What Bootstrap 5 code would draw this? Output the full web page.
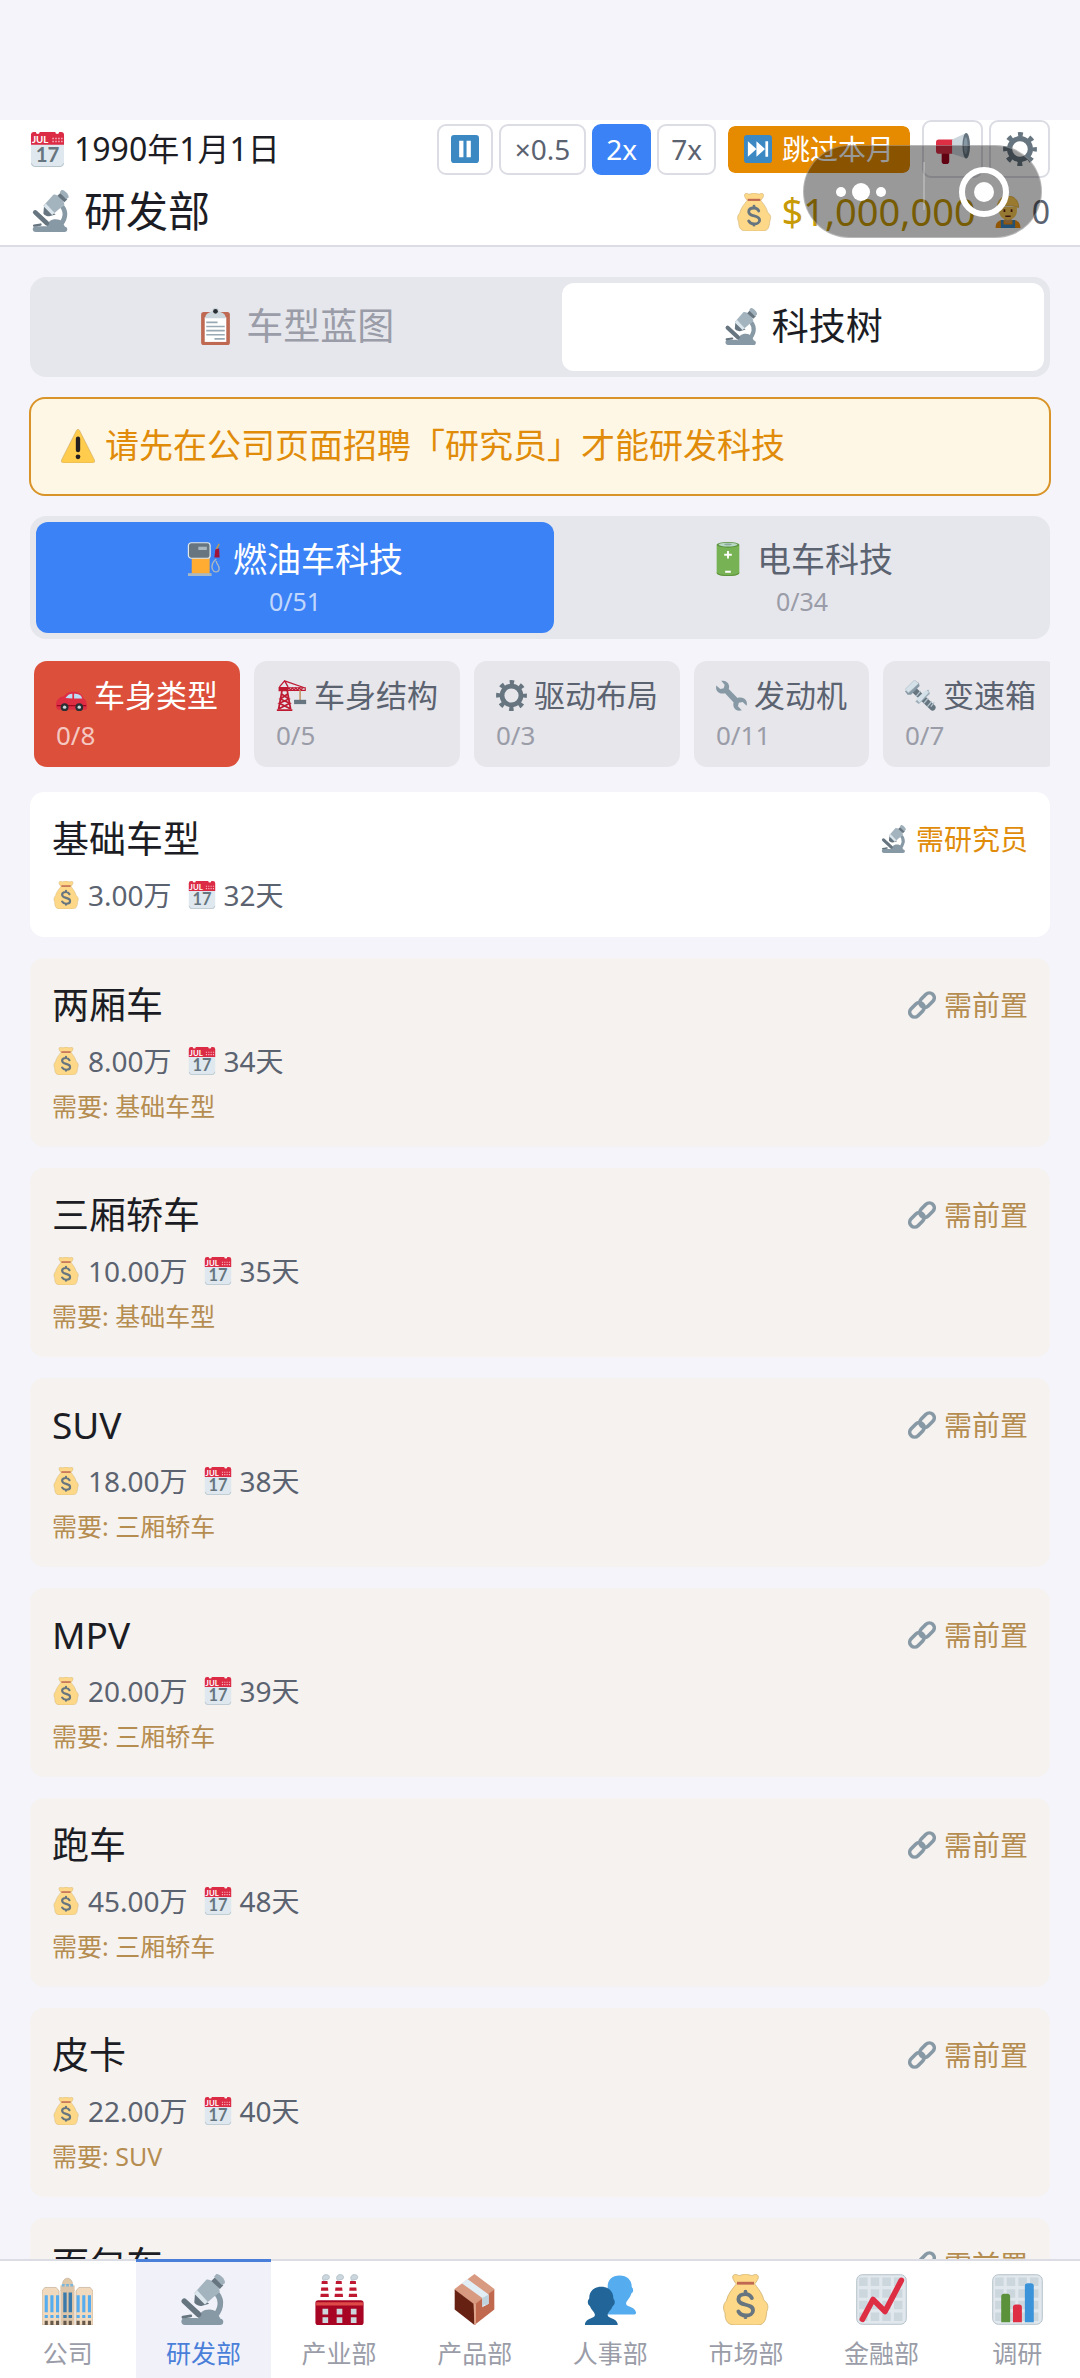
<!DOCTYPE html>
<html lang="zh-CN">
<head>
<meta charset="utf-8">
<meta name="viewport" content="width=device-width, initial-scale=1">
<title>研发部</title>
<link rel="stylesheet" href="https://cdn.jsdelivr.net/npm/bootstrap@5.3.0/dist/css/bootstrap.min.css">
<style>
:root { --ink:#1c1d24; --slate:#5b6270; --muted:#9a9ca8; --amber:#e08c0a; --tan:#b68d50; --blue:#3b82f6; --line:#dcdde4; }
body { font-family:"Noto Sans","Noto Sans CJK SC",sans-serif; background:#f4f4fa; color:var(--ink); line-height:1.25; }
.app-shell { height:100vh; padding-top:120px; }
.ico { width:1em; height:1em; flex:none; overflow:visible; }
.app-head { border-bottom:2px solid var(--line); padding:0 30px; }
.head-top { height:58px; }
.head-sub { height:67px; }
.date-text { font-size:32px; gap:9px; }
.date-text .ico { font-size:35px; }
.page-name { font-size:42px; gap:12px; font-weight:400; }
.tool { height:51px; border:2px solid var(--line); border-radius:9px; background:#fff; color:var(--slate); font-size:28px; padding:0 14px; display:flex; align-items:center; justify-content:center; gap:10px; line-height:1; }
.tool-tight { padding:0 12px; }
.tool-on { background:var(--blue); border-color:var(--blue); color:#fff; }
.tool-skip { background:#e68a00; background-clip:padding-box; border-color:#fff; color:#fff; padding:0 16px; margin:0 4px; }
.tool-sq { width:61px; height:58px; padding:0; font-size:34px; }
.tools { gap:6px; }
.money { font-size:38px; color:#c79a06; gap:8px; }
.staff { font-size:32px; color:var(--slate); gap:8px; }
.capsule { position:absolute; right:38px; top:145px; width:239px; height:93px; border-radius:47px; background:rgba(0,0,0,.4); border:1px solid rgba(255,255,255,.3); }
.capsule button { border:0; background:none; padding:0 4px 0 0; }
.capsule button + button { padding:0 0 0 4px; position:relative; }
.capsule button + button::before { content:""; position:absolute; left:0; top:18%; bottom:30%; border-left:2px solid rgba(255,255,255,.25); }
.page-body { padding:30px 30px 0; scrollbar-width:none; }
.page-body::-webkit-scrollbar, .chips::-webkit-scrollbar { display:none; }
.seg { background:#e6e7ec; border-radius:16px; padding:6px; gap:6px; }
.seg-btn { border:0; background:none; border-radius:12px; color:var(--slate); font-size:34px; padding:0; }
.seg-btn .face { gap:12px; }
.seg-main { font-size:37px; height:88px; color:var(--muted); padding-bottom:2px; }
.seg-main.active { background:#fff; color:var(--ink); }
.seg-fuel { height:111px; }
.seg-fuel.active { background:var(--blue); color:#fff; }
.tally { font-size:25px; line-height:38px; color:var(--muted); }
.seg-fuel .face { line-height:46px; }
.active > .tally { color:rgba(255,255,255,.7); }
.notice { background:#fff7e5; border:2px solid #d89428; border-radius:16px; color:var(--amber); font-size:34px; height:99px; margin:20px -1px; padding:0 30px 2px; gap:10px; }
.chips { gap:14px; margin-top:22px; margin-bottom:25px; padding-left:4px; overflow-x:auto; scrollbar-width:none; }
.chip { height:106px; border:0; border-radius:13px; background:#e6e6eb; color:var(--slate); font-size:31px; padding:2px 22px 0; flex:none; text-align:left; }
.chip .face { gap:7px; line-height:40px; }
.chip .tally { line-height:40px; font-size:26px; }
.chip.active { background:#dc4f3a; color:#fff; }
.tech { border:0; border-radius:14px; padding:20px 22px 22px; margin-bottom:21px; color:var(--ink); }
.tech.locked { background:#f5f2ef; padding-bottom:24px; }
.tech-name { font-size:37px; line-height:54px; margin:0; font-weight:400; }
.tech-state { font-size:28px; color:var(--amber); gap:8px; }
.tech-cost { font-size:28px; line-height:40px; margin-top:9px; color:var(--slate); gap:16px; }
.tech-cost span { gap:8px; }
.tech-need { font-size:25px; line-height:34px; margin:8px 0 0; color:var(--tan); }
.locked .tech-state { color:var(--tan); }
.tab-wrap { overflow:hidden; }
.tab-bar { margin-right:-5px; }
.tab-bar a { flex:1 1 0; height:119px; border-top:2px solid var(--line); padding-top:13px; color:var(--muted); font-size:25px; line-height:36px; text-decoration:none; gap:10px; background:#fff; }
.tab-bar .ico { font-size:51px; }
.tab-bar a.active { border-top:3px solid #4a7fd9; padding-top:12px; background:#f0f1f9; color:#4a7fd9; }
</style>
</head>
<body>
<svg width="0" height="0" class="d-none" aria-hidden="true">
  <symbol id="i-cal" viewBox="0 0 36 36">
    <path fill="#dfe8ee" d="M1 12h34v20a4 4 0 0 1-4 4H5a4 4 0 0 1-4-4z"/>
    <path fill="none" stroke="#b6c2ca" d="M1.500 32a4 4 0 0 0 3.500 3.500h26a4 4 0 0 0 3.500-3.500"/>
    <path fill="#dc2b45" d="M1 13V3a3 3 0 0 1 3-3h2a2 2 0 0 0 4 0h16a2 2 0 0 0 4 0h2a3 3 0 0 1 3 3v10z"/>
    <g fill="#f7b6c0"><path d="M23 6h1.500v1.500H23zm3 0h1.500v1.500H26zm3 0h1.500v1.500H29zm3 0h1.500v1.500H32zM23 9h1.500v1.500H23zm3 0h1.500v1.500H26zm3 0h1.500v1.500H29zm3 0h1.500v1.500H32z"/></g>
    <text x="2" y="11.500" font-family="Lato,sans-serif" font-size="10" font-weight="700" fill="#fff">JUL</text>
    <text x="18" y="31" text-anchor="middle" font-family="Lato,sans-serif" font-size="21" font-weight="700" fill="#66757f">17</text>
  </symbol>
  <symbol id="i-micro" viewBox="0 0 36 36">
    <path fill="none" stroke="#8899a6" stroke-width="4" d="M27.500 14c4 5 3 12-3 17"/>
    <path fill="#8899a6" d="M14 32c1-5 4-7 8-7 5 0 6 3 8 6.500 2.500 0 3 4.500-.5 4.500H5c-3.500 0-3.500-5 0-5h9z"/>
    <path stroke="#66757f" stroke-width="4" stroke-linecap="round" d="M4.500 19.200 14.500 28.500"/>
    <path stroke="#66757f" stroke-width="2" stroke-linecap="round" d="M3.500 30.500 9 29.600"/>
    <path fill="#66757f" d="m12 14-.5 6c0 1 3 3 5 2.500L22 21z"/>
    <path fill="#a4b4bf" d="M20 4c3-1 9 4 9.500 8.500L19 21.500c-2-3-5-6-7.500-8z"/>
    <path fill="#dbe5ec" d="m13.500 11.500 7.500 8-2 2-7.500-7.500z"/>
    <path fill="#66757f" d="m26 2.500 6 5.500-2.500 2.500L23.500 5z"/>
    <path fill="#9fb0bb" d="M27 0c2-.5 7 4 6 6.500L31 8l-5.500-6z"/>
  </symbol>
  <symbol id="i-clip" viewBox="0 0 36 36">
    <rect x="4" y="4" width="28" height="32" rx="2.500" fill="#bf6952"/>
    <path fill="#fff" d="M7.500 9h21v24h-21z"/>
    <path fill="#ccd6dd" d="M14 3h8c0 2 6 1 6 7H8c0-6 6-5 6-7z"/>
    <circle cx="18" cy="2.800" r="3.200" fill="#ccd6dd"/><circle cx="18" cy="3.200" r="2.300" fill="#292f33"/>
    <path stroke="#99aab5" stroke-width="1.600" d="M9 14h11M9 18h18M9 22h18M9 26h18M17 30h10"/>
  </symbol>
  <symbol id="i-warn" viewBox="0 0 36 36">
    <path fill="#ffcc4d" stroke="#c6a763" stroke-width=".6" d="M2.700 36c-2.200 0-3-1.700-2-3.500L16.400 1.500c.9-1.700 2.300-1.700 3.200 0l15.700 31c1 1.800.2 3.500-2 3.500z"/>
    <rect x="15.700" y="8" width="4.600" height="16.500" rx="2.300" fill="#231f20"/><circle cx="18" cy="29.500" r="2.500" fill="#231f20"/>
  </symbol>
  <symbol id="i-pump" viewBox="0 0 36 36">
    <path fill="none" stroke="#aab8c2" stroke-width="1.500" d="M31 18c-5 4-5 8-4 11s6 4 7 0-3-5-3-9"/>
    <path stroke="#bf9a4f" stroke-width="1.600" d="m34 2-3 6"/><path fill="#a0143a" d="m30 8 4-1.500.5 10H29z"/>
    <path fill="#ffac33" d="M5 16h19v18H5z"/><path fill="#aab8c2" d="M1 33h25v3H1z"/>
    <rect x="1.500" y=".8" width="23" height="16.400" rx="3" fill="#66757f" stroke="#e1e8ed" stroke-width="1.300"/>
    <path fill="#aab8c2" d="M12 5h9v3.500h-9z"/>
  </symbol>
  <symbol id="i-batt" viewBox="0 0 36 36">
    <path fill="#77b255" d="M6 3v30c0 4 24 4 24 0V3z"/><path fill="none" stroke="#5c913b" stroke-width="1" d="M6.500 32.500c0 4 23 4 23 0"/>
    <ellipse cx="18" cy="3" rx="12" ry="3" fill="#5c913b"/><ellipse cx="18" cy="2.700" rx="10" ry="2" fill="#b8d8c8"/><ellipse cx="18" cy="2.500" rx="4" ry="1" fill="#8da99b"/>
    <path stroke="#fff" stroke-width="2" d="M18 9.500v8M14 13.500h8M15 31.500h6"/>
  </symbol>
  <symbol id="i-car" viewBox="0 0 36 36">
    <path fill="#dd2e44" d="M0 29c0-5 3-9 9-10 3-4 6-5.500 11-5.500 7 0 10 3 12 8 3 1 4 5 4 10 0 2-1 3-3 3H3c-2 0-3-2-3-5.500z"/>
    <path fill="#bbddf5" d="M11 21c3-4 5-5 8-5v5.500zm10-5c5 0 8 1 9.500 5.500H21z"/>
    <path fill="#a0041e" d="M1 29h34v1.500H1z"/>
    <g fill="#292f33"><circle cx="10" cy="31.500" r="4.500"/><circle cx="27" cy="31.500" r="4.500"/></g><g fill="#ccd6dd"><circle cx="10" cy="31.500" r="2"/><circle cx="27" cy="31.500" r="2"/></g>
  </symbol>
  <symbol id="i-crane" viewBox="0 0 36 36">
    <path fill="none" stroke="#be1931" stroke-width="2" d="M7 12 3 34M13 12l4 22M6 16l9 6-11 5 12 6M14 16l-9 6 11 5-12 6"/>
    <path fill="none" stroke="#be1931" stroke-width="1.500" d="M4 8 10 1l4 7M10 1l23 8"/>
    <path fill="#be1931" d="M3 8h11v5H3zM1 34h18v2H1z"/><path fill="none" stroke="#be1931" stroke-width="1.300" d="M13 9h21v3H13l2-3 2 3 2-3 2 3 2-3 2 3 2-3 2 3 2-3"/>
    <path stroke="#c69b6d" stroke-width="2" d="M28 12v12"/><path fill="#66757f" d="M21 23h14v5H21z"/>
  </symbol>
  <symbol id="i-gear" viewBox="0 0 36 36">
    <circle cx="18" cy="18" r="11" fill="none" stroke="#66757f" stroke-width="5.500"/>
    <circle cx="18" cy="18" r="15.400" fill="none" stroke="#66757f" stroke-width="5" stroke-dasharray="5.200 6.895" stroke-dashoffset="2.600"/>
  </symbol>
  <symbol id="i-wrench" viewBox="0 0 36 36">
    <path fill="#8899a6" d="M6 1c4-1 8 1 9 5 .4 1.500.2 3-.2 4.500L25 21c4-1.500 9 0 10.500 4 .6 1.700.4 3.500 0 5L31 25.500l-4.500 1-1 4L30 35c-4 1.500-8 0-9.500-4-.6-1.700-.5-3.500 0-5L10.500 15.500C6.500 16.500 2 15 .5 11.500 0 10 0 8 .3 6.500L5 10.500l4-1 1-4z"/>
  </symbol>
  <symbol id="i-bolt" viewBox="0 0 36 36">
    <path stroke="#66757f" stroke-width="7" stroke-linecap="round" d="m11 12 21 20"/>
    <path stroke="#b3c3cd" stroke-width="1.500" d="m13 19 5-6m4 14 5-6m-1 10 5-6m-14-2 5-6m8 14 4-5"/>
    <path fill="#8899a6" d="m0 13 3 4 4 0 10-10-1-4z"/><path fill="#d5e1e8" stroke="#9fb0bb" stroke-width=".6" d="m0 11 11-11 5 4L4 15z"/>
    <path fill="#9fb0bb" d="m12 25 4 3 13-12-2-5z"/><path fill="#d5e1e8" d="m13 22 11-10 4 2-11 12z"/>
  </symbol>
  <symbol id="i-bag" viewBox="0 0 36 36">
    <path fill="#fdd888" stroke="#c9ab6c" stroke-width=".5" d="M11.500 7C9 4 8 1.500 10 .5c2-.8 2 .8 4 .5 2-.3 2-1 4-1s2 .7 4 1c2 .3 2-1.300 4-.5 2 1 1 3.500-1.500 6.500 3 4 5.500 7 6.500 11.500 3 2 3.500 5 2 8C32.500 34 30.500 36 26 36H11c-5 0-7.500-2-7.500-8.500-1.500-3-1.500-6 1-8.500 1-5 4-8 7-12z"/>
    <path fill="#bf6952" d="M12 5.500h12v2H12z"/>
    <path fill="none" stroke="#66757f" stroke-width="2.700" stroke-linecap="round" d="M22.500 17c-1-2-2.500-2.800-4.500-2.800-3 0-5 1.300-5 3.500 0 5.500 10.300 2.500 10.300 8 0 2.200-2.300 3.600-5 3.600-2.300 0-4.300-1-5.300-2.800M18 12.500v1.500M18 29.500v1"/>
  </symbol>
  <symbol id="i-link" viewBox="0 0 36 36">
    <g fill="none" stroke="#8899a6" stroke-width="4.600"><rect x="14" y="5.500" width="21" height="12.500" rx="6.200" transform="rotate(-45 24.500 11.750)"/><rect x="1" y="18" width="21" height="12.500" rx="6.200" transform="rotate(-45 11.500 24.250)"/></g>
  </symbol>
  <symbol id="i-pause" viewBox="0 0 36 36"><rect width="36" height="36" rx="4" fill="#3b88c3"/><path fill="#fff" d="M10.500 7.500h5.500v21h-5.500zM20 7.500h5.500v21H20z"/></symbol>
  <symbol id="i-next" viewBox="0 0 36 36"><rect width="36" height="36" rx="4" fill="#3b88c3"/><path fill="#fff" d="M5 8l11 10L5 28zM16 8l11 10-11 10zM27.500 8H31v20h-3.500z"/></symbol>
  <symbol id="i-horn" viewBox="0 0 36 36">
    <path fill="#a0041e" d="M6 18h8v13a3 3 0 0 1-3 3H9a3 3 0 0 1-3-3z"/><path fill="#dd2e44" d="M3 8h15v15H3a3 3 0 0 1-3-3v-9a3 3 0 0 1 3-3z"/>
    <path fill="#ccd6dd" d="M17 8 32 1v27l-15-5z"/><ellipse cx="32" cy="14.500" rx="4" ry="13.500" fill="#66757f"/><ellipse cx="31.500" cy="14.500" rx="2" ry="9" fill="#8899a6"/>
  </symbol>
  <symbol id="i-worker" viewBox="0 0 36 36">
    <path fill="#f4900c" d="M4 36c0-7 4-9 9-9h10c5 0 9 2 9 9z"/><path fill="#3b88c3" d="M10 27h3v5h10v-5h3v9H10z"/>
    <path fill="#d39a5b" d="M14 22h8v7c-2 2-6 2-8 0z"/><path fill="#f9ca55" d="M8 12h20v5c0 6-5 10-10 10S8 23 8 17z"/>
    <path fill="#ffcc4d" stroke="#d9a635" stroke-width=".8" d="M6 13C6 5 11 0 18 0s12 5 12 13c-7-3-17-3-24 0z"/><path fill="#662113" d="M13 15h2v3h-2zm8 0h2v3h-2zm-6 7h6v1.500h-6z"/>
  </symbol>
  <symbol id="i-office" viewBox="0 0 36 36">
    <path fill="#f1d9bd" stroke="#c5b097" stroke-width=".5" d="M0 12l2-2.500h8L12 12v24H0zM24 12l2-2.500h8l2 2.500v24H24z"/><path fill="#dcc5a9" d="M13 11h10v25H13z"/>
    <path fill="#dcc5a9" d="M13 8h10v4H13z"/><path fill="#dfc9a8" stroke="#c5b097" stroke-width=".5" d="M14.500 7.500c0-6 7-6 7 0z"/>
    <path stroke="#55acee" stroke-width="2.200" d="M3 15v12M7 15v12M11 15v12M25.500 15v12M29.500 15v12M33.500 15v12M3 29v2M7 29v2M11 29v2M25.500 29v2M29.500 29v2M33.500 29v2"/>
    <path stroke="#3b7bab" stroke-width="2.400" d="M16.200 13v14M20 13v14M16.200 29v2M20 29v2"/><path stroke="#7cb5d8" stroke-width="1.800" d="M14 8h8" stroke-dasharray="2 1"/>
    <path stroke="#66594c" stroke-width="2.200" d="M3 33v3M7 33v3M11 33v3M16.200 33v3M20 33v3M25.500 33v3M29.500 33v3M33.500 33v3"/>
  </symbol>
  <symbol id="i-factory" viewBox="0 0 36 36">
    <g id="stack"><path fill="#fff" d="m5.500 5 4 0 1 14h-6z"/><path fill="#be1931" d="M5.500 5h4l.2 2H5.300zM5.100 9.500h4.800l.2 2.300H4.900zM4.700 14h5.600l.2 2.300h-6z"/><path fill="#ccd6dd" stroke="#aab8c2" stroke-width=".5" d="M6.500 4.500C5 2 7 0 9 .5c2.500 0 2.500 3.500 0 3.500z"/></g>
    <use href="#stack" x="10"/><use href="#stack" x="20"/>
    <rect x="1" y="18.500" width="34" height="17.500" rx="2" fill="#a80424"/><path fill="#dd4a48" d="M1.500 20h33v2.300h-33z"/>
    <path fill="#ccd6dd" d="M6 24.500h4v4H6zm10 0h4v4h-4zm10 0h4v4h-4zM6 30.500h4v4H6zm10 0h4v4h-4zm10 0h4v4h-4z"/>
  </symbol>
  <symbol id="i-box" viewBox="0 0 36 36">
    <path fill="#d99a82" d="M18 0 32 10.500v1L18 22 4 11.500v-1z"/><path fill="#662113" d="m4 11 14 10.500V36L4 25z"/><path fill="#c1694f" d="M32 11 18 21.500V36l14-11z"/><path fill="#e0a58d" d="M17.300 21h1.700v15l-1-.2z"/>
    <path fill="#e2eef5" d="m9 6.500 4-3L28 14.500V21l-4.500 2.500V17z"/><path fill="#bfd3df" d="M23.500 17 28 14.500V21l-2.200 1.200-.8-.9-1.500 2z"/>
  </symbol>
  <symbol id="i-people" viewBox="0 0 36 36">
    <path fill="#55acee" d="M16 9c0-5 3-8 8.500-8 5 0 8.500 3 8.500 8 0 .7 1 .8 1 2.500s-1 1.700-1.400 2.500C32 17 29 19 29 21c0 2.500 6 1.500 7 6 .2 1-.3 1.500-1 1.500H16z"/>
    <path fill="#226699" d="M3 17c0-5 3.500-8 8.500-8s8.500 3 8.500 8c0 1 1 1 1 3s-1.200 2.300-1.600 3C18.500 25.500 16 27 16 29c0 2.500 6 2 7 6 .3 1-.2 1.500-1 1.500H1c-.8 0-1.300-.5-1-1.500 1-4 7-3.500 7-6 0-2-2.500-3.500-3.400-6C3.200 22.300 2 22 2 20s1-2 1-3z"/>
  </symbol>
  <symbol id="i-grid" viewBox="0 0 36 36"><rect x=".5" y=".5" width="35" height="35" rx="4" fill="#e1e8ed" stroke="#b4c0c8" stroke-width=".7"/>
    <path fill="none" stroke="#ccd6dd" stroke-width="6" stroke-dasharray="6 2.200" d="M2.200 5.500h31.200M2.200 13.700h31.200M2.200 21.900h31.200M2.200 30.100h31.200"/></symbol>
  <symbol id="i-line" viewBox="0 0 36 36"><use href="#i-grid"/><path fill="none" stroke="#dd2e44" stroke-width="4" stroke-linecap="round" stroke-linejoin="round" d="m4.500 32 7.500-14 8.500 8.500L32 4.500"/></symbol>
  <symbol id="i-bars" viewBox="0 0 36 36"><use href="#i-grid"/><path fill="#5c913b" d="M6.500 34V16a2 2 0 0 1 2-2h2.300a2 2 0 0 1 2 2v18z"/><path fill="#dd2e44" d="M14.800 34V23.500a2 2 0 0 1 2-2h2.300a2 2 0 0 1 2 2V34z"/><path fill="#3b94d9" d="M23.200 34V8.500a2 2 0 0 1 2-2h2.300a2 2 0 0 1 2 2V34z"/></symbol>
</svg>

<div class="app-shell d-flex flex-column overflow-hidden">
  <header class="app-head bg-white flex-shrink-0">
    <div class="head-top d-flex align-items-center justify-content-between">
      <div class="date-text d-flex align-items-center"><svg class="ico"><use href="#i-cal"/></svg>1990年1月1日</div>
      <div class="tools d-flex align-items-center">
        <button type="button" class="tool tool-tight" aria-label="暂停"><svg class="ico"><use href="#i-pause"/></svg></button>
        <button type="button" class="tool">×0.5</button>
        <button type="button" class="tool tool-tight tool-on">2x</button>
        <button type="button" class="tool tool-tight">7x</button>
        <button type="button" class="tool tool-skip"><svg class="ico"><use href="#i-next"/></svg>跳过本月</button>
        <button type="button" class="tool tool-sq" aria-label="公告"><svg class="ico"><use href="#i-horn"/></svg></button>
        <button type="button" class="tool tool-sq" aria-label="设置"><svg class="ico"><use href="#i-gear"/></svg></button>
      </div>
    </div>
    <div class="head-sub d-flex align-items-center justify-content-between">
      <h1 class="page-name d-flex align-items-center m-0"><svg class="ico"><use href="#i-micro"/></svg>研发部</h1>
      <div class="d-flex align-items-center gap-3">
        <span class="money d-flex align-items-center"><svg class="ico"><use href="#i-bag"/></svg>$1,000,000</span>
        <span class="staff d-flex align-items-center"><svg class="ico"><use href="#i-worker"/></svg>0</span>
      </div>
    </div>
  </header>
  <div class="capsule d-flex">
    <button type="button" class="w-50" aria-label="更多"><svg width="60" height="24" viewBox="0 0 60 24" fill="#fff"><circle cx="10" cy="12" r="5"/><circle cx="30" cy="12" r="9"/><circle cx="50" cy="12" r="5"/></svg></button>
    <button type="button" class="w-50" aria-label="关闭"><svg width="52" height="52" viewBox="0 0 52 52"><circle cx="26" cy="26" r="22" fill="none" stroke="#fff" stroke-width="6"/><circle cx="26" cy="26" r="10" fill="#fff"/></svg></button>
  </div>

  <main class="page-body flex-grow-1 overflow-auto">
    <div class="seg d-flex">
      <button type="button" class="seg-btn seg-main flex-grow-1"><span class="face d-flex align-items-center justify-content-center"><svg class="ico"><use href="#i-clip"/></svg>车型蓝图</span></button>
      <button type="button" class="seg-btn seg-main flex-grow-1 active"><span class="face d-flex align-items-center justify-content-center"><svg class="ico"><use href="#i-micro"/></svg>科技树</span></button>
    </div>

    <div class="notice d-flex align-items-center" role="alert"><svg class="ico"><use href="#i-warn"/></svg><span>请先在公司页面招聘「研究员」才能研发科技</span></div>

    <div class="seg d-flex">
      <button type="button" class="seg-btn seg-fuel flex-grow-1 active"><span class="face d-flex align-items-center justify-content-center"><svg class="ico"><use href="#i-pump"/></svg>燃油车科技</span><span class="tally d-block">0/51</span></button>
      <button type="button" class="seg-btn seg-fuel flex-grow-1"><span class="face d-flex align-items-center justify-content-center"><svg class="ico"><use href="#i-batt"/></svg>电车科技</span><span class="tally d-block">0/34</span></button>
    </div>

    <div class="chips d-flex">
      <button type="button" class="chip active"><span class="face d-flex align-items-center"><svg class="ico"><use href="#i-car"/></svg>车身类型</span><span class="tally d-block">0/8</span></button>
      <button type="button" class="chip"><span class="face d-flex align-items-center"><svg class="ico"><use href="#i-crane"/></svg>车身结构</span><span class="tally d-block">0/5</span></button>
      <button type="button" class="chip"><span class="face d-flex align-items-center"><svg class="ico"><use href="#i-gear"/></svg>驱动布局</span><span class="tally d-block">0/3</span></button>
      <button type="button" class="chip"><span class="face d-flex align-items-center"><svg class="ico"><use href="#i-wrench"/></svg>发动机</span><span class="tally d-block">0/11</span></button>
      <button type="button" class="chip"><span class="face d-flex align-items-center"><svg class="ico"><use href="#i-bolt"/></svg>变速箱</span><span class="tally d-block">0/7</span></button>
    </div>

    <article class="tech card">
      <div class="d-flex align-items-center justify-content-between"><h2 class="tech-name">基础车型</h2><span class="tech-state d-flex align-items-center"><svg class="ico"><use href="#i-micro"/></svg>需研究员</span></div>
      <div class="tech-cost d-flex"><span class="d-flex align-items-center"><svg class="ico"><use href="#i-bag"/></svg>3.00万</span><span class="d-flex align-items-center"><svg class="ico"><use href="#i-cal"/></svg>32天</span></div>
    </article>
    <article class="tech card locked">
      <div class="d-flex align-items-center justify-content-between"><h2 class="tech-name">两厢车</h2><span class="tech-state d-flex align-items-center"><svg class="ico"><use href="#i-link"/></svg>需前置</span></div>
      <div class="tech-cost d-flex"><span class="d-flex align-items-center"><svg class="ico"><use href="#i-bag"/></svg>8.00万</span><span class="d-flex align-items-center"><svg class="ico"><use href="#i-cal"/></svg>34天</span></div>
      <p class="tech-need">需要: 基础车型</p>
    </article>
    <article class="tech card locked">
      <div class="d-flex align-items-center justify-content-between"><h2 class="tech-name">三厢轿车</h2><span class="tech-state d-flex align-items-center"><svg class="ico"><use href="#i-link"/></svg>需前置</span></div>
      <div class="tech-cost d-flex"><span class="d-flex align-items-center"><svg class="ico"><use href="#i-bag"/></svg>10.00万</span><span class="d-flex align-items-center"><svg class="ico"><use href="#i-cal"/></svg>35天</span></div>
      <p class="tech-need">需要: 基础车型</p>
    </article>
    <article class="tech card locked">
      <div class="d-flex align-items-center justify-content-between"><h2 class="tech-name">SUV</h2><span class="tech-state d-flex align-items-center"><svg class="ico"><use href="#i-link"/></svg>需前置</span></div>
      <div class="tech-cost d-flex"><span class="d-flex align-items-center"><svg class="ico"><use href="#i-bag"/></svg>18.00万</span><span class="d-flex align-items-center"><svg class="ico"><use href="#i-cal"/></svg>38天</span></div>
      <p class="tech-need">需要: 三厢轿车</p>
    </article>
    <article class="tech card locked">
      <div class="d-flex align-items-center justify-content-between"><h2 class="tech-name">MPV</h2><span class="tech-state d-flex align-items-center"><svg class="ico"><use href="#i-link"/></svg>需前置</span></div>
      <div class="tech-cost d-flex"><span class="d-flex align-items-center"><svg class="ico"><use href="#i-bag"/></svg>20.00万</span><span class="d-flex align-items-center"><svg class="ico"><use href="#i-cal"/></svg>39天</span></div>
      <p class="tech-need">需要: 三厢轿车</p>
    </article>
    <article class="tech card locked">
      <div class="d-flex align-items-center justify-content-between"><h2 class="tech-name">跑车</h2><span class="tech-state d-flex align-items-center"><svg class="ico"><use href="#i-link"/></svg>需前置</span></div>
      <div class="tech-cost d-flex"><span class="d-flex align-items-center"><svg class="ico"><use href="#i-bag"/></svg>45.00万</span><span class="d-flex align-items-center"><svg class="ico"><use href="#i-cal"/></svg>48天</span></div>
      <p class="tech-need">需要: 三厢轿车</p>
    </article>
    <article class="tech card locked">
      <div class="d-flex align-items-center justify-content-between"><h2 class="tech-name">皮卡</h2><span class="tech-state d-flex align-items-center"><svg class="ico"><use href="#i-link"/></svg>需前置</span></div>
      <div class="tech-cost d-flex"><span class="d-flex align-items-center"><svg class="ico"><use href="#i-bag"/></svg>22.00万</span><span class="d-flex align-items-center"><svg class="ico"><use href="#i-cal"/></svg>40天</span></div>
      <p class="tech-need">需要: SUV</p>
    </article>
    <article class="tech card locked">
      <div class="d-flex align-items-center justify-content-between"><h2 class="tech-name">面包车</h2><span class="tech-state d-flex align-items-center"><svg class="ico"><use href="#i-link"/></svg>需前置</span></div>
    </article>
  </main>

  <div class="tab-wrap flex-shrink-0">
  <nav class="tab-bar d-flex" aria-label="部门">
    <a href="#" class="d-flex flex-column align-items-center"><svg class="ico"><use href="#i-office"/></svg>公司</a>
    <a href="#" class="d-flex flex-column align-items-center active" aria-current="page"><svg class="ico"><use href="#i-micro"/></svg>研发部</a>
    <a href="#" class="d-flex flex-column align-items-center"><svg class="ico"><use href="#i-factory"/></svg>产业部</a>
    <a href="#" class="d-flex flex-column align-items-center"><svg class="ico"><use href="#i-box"/></svg>产品部</a>
    <a href="#" class="d-flex flex-column align-items-center"><svg class="ico"><use href="#i-people"/></svg>人事部</a>
    <a href="#" class="d-flex flex-column align-items-center"><svg class="ico"><use href="#i-bag"/></svg>市场部</a>
    <a href="#" class="d-flex flex-column align-items-center"><svg class="ico"><use href="#i-line"/></svg>金融部</a>
    <a href="#" class="d-flex flex-column align-items-center"><svg class="ico"><use href="#i-bars"/></svg>调研</a>
  </nav>
  </div>
</div>
<script src="https://cdn.jsdelivr.net/npm/bootstrap@5.3.0/dist/js/bootstrap.bundle.min.js"></script>
</body>
</html>
